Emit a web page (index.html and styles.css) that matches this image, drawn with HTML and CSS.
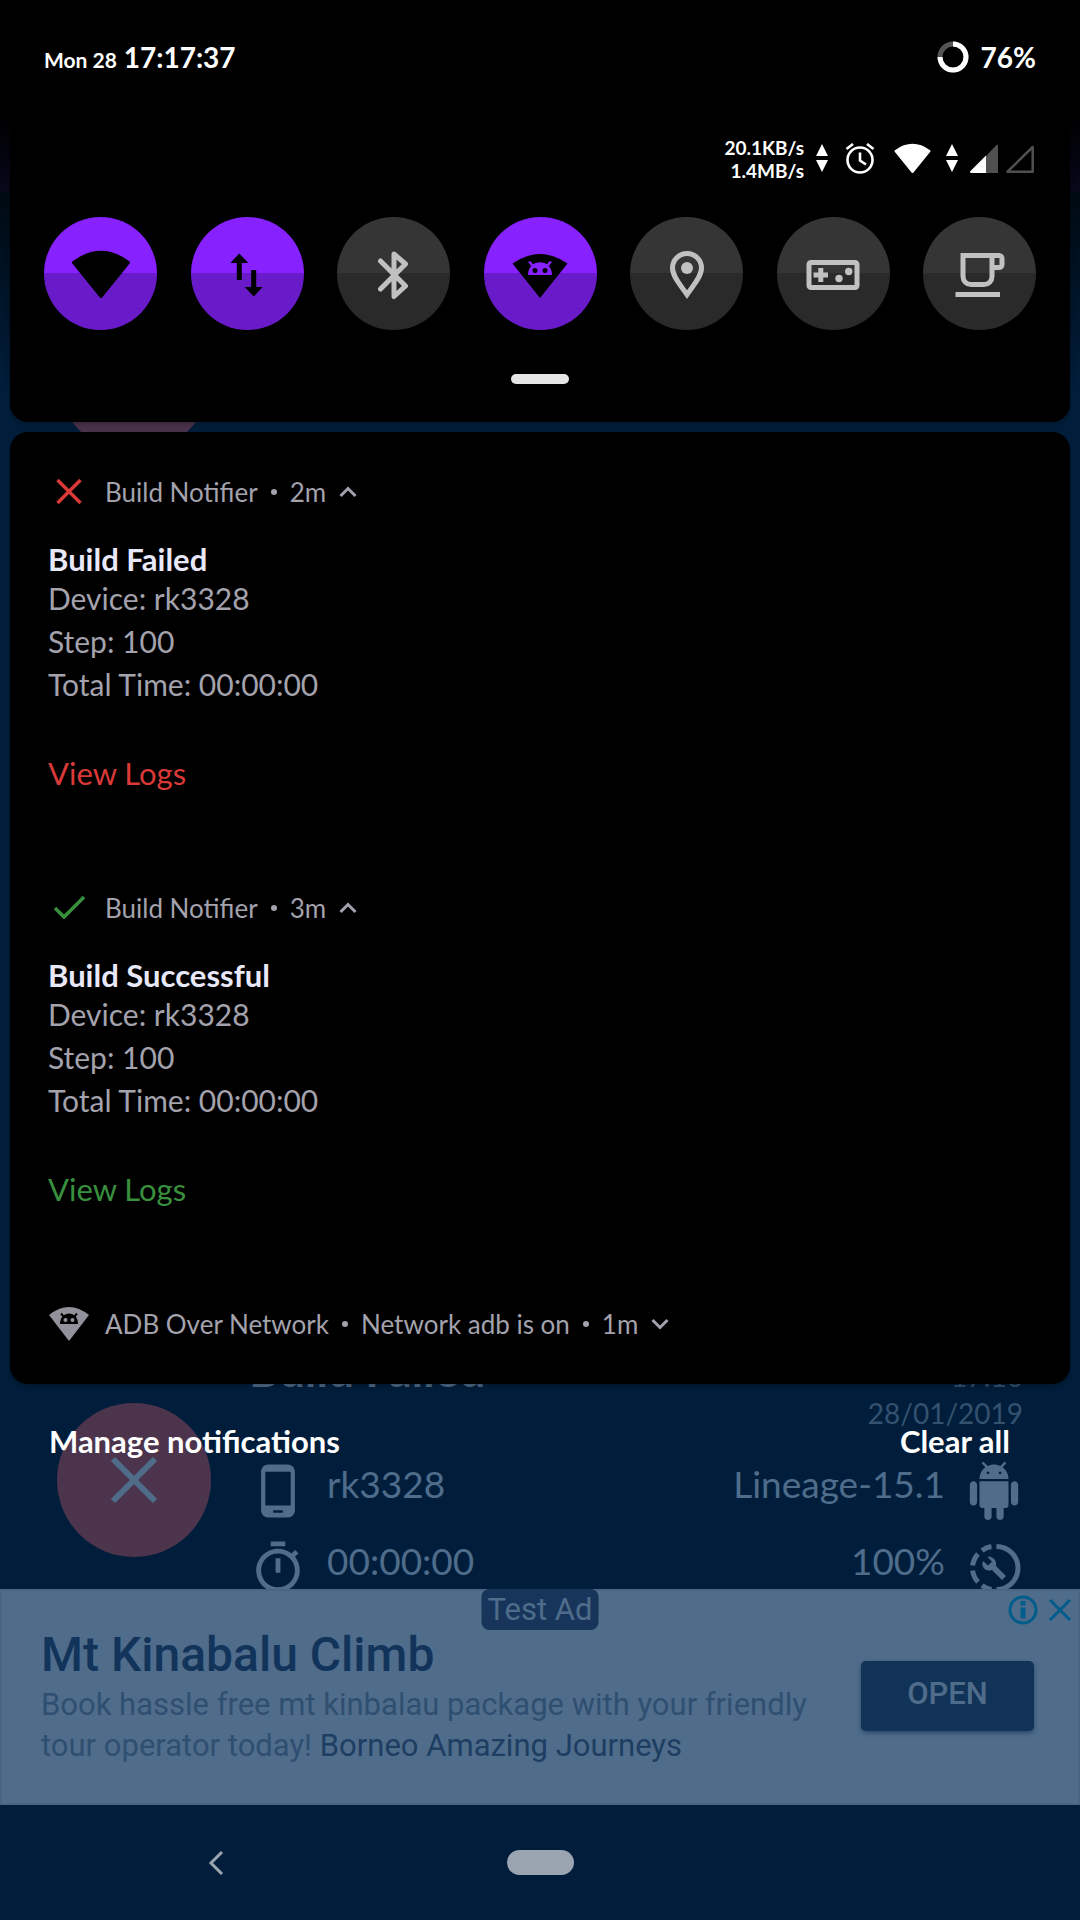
FILE: index.html
```html
<!DOCTYPE html>
<html lang="en">
<head>
<meta charset="utf-8">
<meta name="viewport" content="width=device-width, initial-scale=1">
<title>Build Notifier</title>
<link rel="stylesheet" href="styles.css">
</head>
<body>
<div class="screen">

  <main class="app">
    <section class="builds">
      <div class="build-badge"></div>
      <article class="build">
        <div class="build-badge">
          <svg width="60" height="60" viewBox="0 0 60 60" fill="none" stroke="currentColor" stroke-width="6"><path d="M9 9L51 51M51 9L9 51"/></svg>
        </div>
        <div class="build-info">
          <header class="build-head">
            <h2>Build Failed</h2>
            <p class="build-date">17:16<br>28/01/2019</p>
          </header>
          <div class="build-row">
            <svg class="build-icon" viewBox="0 0 24 24" fill="currentColor"><path d="M16 1H8C6.34 1 5 2.34 5 4v16c0 1.66 1.34 3 3 3h8c1.66 0 3-1.34 3-3V4c0-1.66-1.34-3-3-3zm-2 20h-4v-1h4v1zm3.25-3H6.75V4h10.5v14z"/></svg>
            <span>rk3328</span>
            <span class="end">Lineage-15.1</span>
            <svg class="build-icon" viewBox="0 0 24 24" fill="currentColor"><path d="M6 18c0 .55.45 1 1 1h1v3.5c0 .83.67 1.5 1.5 1.5s1.5-.67 1.5-1.5V19h2v3.5c0 .83.67 1.5 1.5 1.5s1.5-.67 1.5-1.5V19h1c.55 0 1-.45 1-1V8H6v10zM3.5 8C2.67 8 2 8.67 2 9.5v7c0 .83.67 1.5 1.5 1.5S5 17.33 5 16.5v-7C5 8.67 4.33 8 3.5 8zm17 0c-.83 0-1.5.67-1.5 1.5v7c0 .83.67 1.5 1.5 1.5s1.5-.67 1.5-1.5v-7c0-.83-.67-1.5-1.5-1.5zm-4.97-5.84l1.3-1.3c.2-.2.2-.51 0-.71-.2-.2-.51-.2-.71 0l-1.48 1.48C13.85 1.23 12.95 1 12 1c-.96 0-1.86.23-2.66.63L7.85.15c-.2-.2-.51-.2-.71 0-.2.2-.2.51 0 .71l1.31 1.31C6.97 3.26 6 5.01 6 7h12c0-1.99-.97-3.75-2.47-4.84zM10 5H9V4h1v1zm5 0h-1V4h1v1z"/></svg>
          </div>
          <div class="build-row">
            <svg class="build-icon" viewBox="0 0 24 24" fill="currentColor"><path d="M15 1H9v2h6V1zm-4 13h2V8h-2v6zm8.03-6.61l1.42-1.42c-.43-.51-.9-.99-1.41-1.41l-1.42 1.42C16.07 4.74 14.12 4 12 4c-4.97 0-9 4.03-9 9s4.02 9 9 9 9-4.03 9-9c0-2.12-.74-4.07-1.97-5.61zM12 20c-3.87 0-7-3.13-7-7s3.13-7 7-7 7 3.13 7 7-3.13 7-7 7z"/></svg>
            <span>00:00:00</span>
            <span class="end">100%</span>
            <svg class="build-icon" viewBox="0 0 58 58" fill="none" stroke="currentColor" stroke-width="5"><path d="M31.500 7.500A21.500 21.500 0 0 1 31.500 50.500M26.500 7.500A21.500 21.500 0 0 0 17 11.500M13 15A21.500 21.500 0 0 0 7.600 26.500M7.600 31.500A21.500 21.500 0 0 0 13 43M17 46.500A21.500 21.500 0 0 0 26.500 50.500"/><path fill="currentColor" stroke="none" d="M41 37L31 27C32 23 29.500 18 24 17.500L22.500 18L27 22.500L23 26.500L18 22C15.500 27 20.500 33.500 27 31L37 41Z"/></svg>
          </div>
        </div>
      </article>
    </section>

    <aside class="ad">
      <span class="ad-label">Test Ad</span>
      <div class="ad-tools">
        <button type="button" aria-label="Ad information"><svg width="30" height="30" viewBox="0 0 30 30" fill="none" stroke="currentColor" stroke-width="3"><circle cx="15" cy="15" r="13"/><path stroke-width="5" d="M15 12.500V23.500M15 6V10.500"/></svg></button>
        <button type="button" aria-label="Close ad"><svg width="24" height="30" viewBox="0 0 24 30" fill="none" stroke="currentColor" stroke-width="3"><path d="M2 5L22 25M22 5L2 25"/></svg></button>
      </div>
      <div class="ad-copy">
        <h2>Mt Kinabalu Climb</h2>
        <p>Book hassle free mt kinbalau package with your friendly tour operator today! <a href="#">Borneo Amazing Journeys</a></p>
      </div>
      <button class="ad-open" type="button">OPEN</button>
    </aside>

    <nav class="navbar">
      <button type="button" aria-label="Back"><svg width="16" height="24" viewBox="0 0 16 24" fill="none" stroke="currentColor" stroke-width="3"><path d="M14 1L3 12L14 23"/></svg></button>
      <button type="button" aria-label="Home"><span class="home-pill"></span></button>
    </nav>
  </main>

  <div class="shade">
    <section class="quick">
      <div class="status">
        <div class="clock"><span class="date">Mon 28</span> <time>17:17:37</time></div>
        <div class="battery">
          <svg width="32" height="32" viewBox="0 0 32 32" fill="none" stroke-width="5"><circle cx="16" cy="16" r="13" stroke="#555"/><path stroke="#fff" d="M16 3A13 13 0 1 1 3 16"/></svg>
          <span>76%</span>
        </div>
      </div>
      <div class="signals">
        <p class="speed">20.1KB/s<br>1.4MB/s</p>
        <svg width="12" height="30" viewBox="0 0 12 30" fill="#fff"><path d="M6 0L12 12H0ZM6 28L12 16H0Z"/></svg>
        <svg width="42" height="32" viewBox="0 0 42 32" fill="none" stroke="#fff" stroke-width="2.600"><circle cx="20" cy="17" r="12.500"/><path d="M20 9.500V17.500L26 21.500M6.500 6L13 1M33.500 6L27 1"/></svg>
        <svg width="40" height="32" viewBox="0 0 40 32" fill="#fff" stroke="#fff" stroke-width="2" stroke-linejoin="round"><path d="M1.500 8Q18.500 -4.500 35.500 8L18.500 29Z"/></svg>
        <svg width="12" height="30" viewBox="0 0 12 30" fill="#fff"><path d="M6 0L12 12H0ZM6 28L12 16H0Z"/></svg>
        <div class="cells">
          <svg width="30" height="30" viewBox="0 0 30 30"><path fill="#505050" d="M28 1V29H16V12L26.500 1Z"/><path fill="#fff" d="M16 11.500V29H1.500Q0 29 0 27.500Z"/></svg>
          <svg width="30" height="30" viewBox="0 0 30 30" fill="none" stroke="#505050" stroke-width="2.500" stroke-linejoin="round"><path d="M26.700 3V27.700H1.500Z"/></svg>
        </div>
      </div>
      <div class="tiles">
        <button type="button" class="tile on" aria-label="Wi-Fi"><svg viewBox="0 0 60 60" fill="#000" stroke="#000" stroke-width="3" stroke-linejoin="round"><path d="M2.500 18.500Q30 -2 57.500 18.500L30 52.500Z"/></svg></button>
        <button type="button" class="tile on" aria-label="Mobile data"><svg viewBox="0 0 60 60" fill="#000"><path d="M22.300 9.500L31.300 19H24.800V36H19.800V19H13.300ZM36.700 52.500L45.700 43H39.200V26H34.200V43H27.700Z"/></svg></button>
        <button type="button" class="tile" aria-label="Bluetooth"><svg viewBox="0 0 60 60" fill="none" stroke="currentColor" stroke-width="5" stroke-linecap="round" stroke-linejoin="round"><path d="M16.500 17L41.500 42L30 52.500V10L41.500 20L16.500 45"/></svg></button>
        <button type="button" class="tile on" aria-label="ADB over network"><svg viewBox="0 0 60 60"><path fill="#000" d="M2.500 19.500Q30 .5 57.500 19.500L30 54Z"/><path fill="#8722ff" d="M18 31C18 14 42 14 42 31Z"/><path stroke="#8722ff" stroke-width="2.500" d="M19 17.500L23.500 22.500M41 17.500L36.500 22.500"/><circle cx="25" cy="26.500" r="2.500"/><circle cx="35" cy="26.500" r="2.500"/></svg></button>
        <button type="button" class="tile" aria-label="Location"><svg viewBox="0 0 60 60" fill="none" stroke="currentColor" stroke-width="5"><path d="M30 50.500C25 43 15.500 33 15.500 24A14.500 14.500 0 0 1 44.500 24C44.500 33 35 43 30 50.500Z"/><circle cx="30" cy="24" r="6" fill="currentColor" stroke="none"/></svg></button>
        <button type="button" class="tile" aria-label="Gaming mode"><svg viewBox="0 0 60 60" fill="none" stroke="currentColor" stroke-width="5"><rect x="6" y="18.500" width="48" height="25" rx="2"/><path d="M10.500 31H25M17.800 24V38"/><g fill="currentColor" stroke="none"><circle cx="36" cy="34.500" r="3.700"/><circle cx="45.700" cy="27.500" r="3.700"/></g></svg></button>
        <button type="button" class="tile" aria-label="Caffeine"><svg viewBox="0 0 60 60" fill="none" stroke="currentColor" stroke-width="5"><path d="M13 11.500H42V32.500A8 8 0 0 1 34 40.500H21A8 8 0 0 1 13 32.500ZM42 11.500H49A3 3 0 0 1 52 14.500V20.500A3 3 0 0 1 49 23.500H42M5.500 50.500H50"/></svg></button>
      </div>
      <div class="handle"></div>
    </section>

    <section class="notifications">
      <article class="note failed">
        <header class="note-head">
          <svg class="note-icon" viewBox="0 0 42 36" fill="none" stroke="currentColor" stroke-width="3.500"><path d="M9.500 6L32.500 29M32.500 6L9.500 29"/></svg>
          <span>Build Notifier</span><i class="dot"></i><span>2m</span>
          <svg class="chevron" viewBox="0 0 18 12" fill="none" stroke="currentColor" stroke-width="3"><path d="M1.500 10L9 2.500L16.500 10"/></svg>
        </header>
        <h3>Build Failed</h3>
        <p>Device: rk3328<br>Step: 100<br>Total Time: 00:00:00</p>
        <button type="button">View Logs</button>
      </article>
      <article class="note passed">
        <header class="note-head">
          <svg class="note-icon" viewBox="0 0 42 36" fill="none" stroke="currentColor" stroke-width="3.500"><path d="M7 18L16 27L36 7"/></svg>
          <span>Build Notifier</span><i class="dot"></i><span>3m</span>
          <svg class="chevron" viewBox="0 0 18 12" fill="none" stroke="currentColor" stroke-width="3"><path d="M1.500 10L9 2.500L16.500 10"/></svg>
        </header>
        <h3>Build Successful</h3>
        <p>Device: rk3328<br>Step: 100<br>Total Time: 00:00:00</p>
        <button type="button">View Logs</button>
      </article>
      <article class="note">
        <header class="note-head">
          <svg class="note-icon" viewBox="0 0 42 36"><path fill="#92929d" d="M1 9Q21 -7 41 9L21 35Z"/><path d="M12 18C12 4 30 4 30 18Z"/><path stroke="#000" stroke-width="2" d="M13 7.500L16 11M29 7.500L26 11"/><circle fill="#92929d" cx="17.500" cy="14" r="2"/><circle fill="#92929d" cx="24.500" cy="14" r="2"/></svg>
          <span>ADB Over Network</span><i class="dot"></i><span>Network adb is on</span><i class="dot"></i><span>1m</span>
          <svg class="chevron" viewBox="0 0 18 12" fill="none" stroke="currentColor" stroke-width="3"><path d="M1.500 2L9 9.500L16.500 2"/></svg>
        </header>
      </article>
    </section>

    <footer class="shade-actions">
      <button type="button">Manage notifications</button>
      <button type="button">Clear all</button>
    </footer>
  </div>
</div>
</body>
</html>
```
FILE: styles.css
```css
* { box-sizing: border-box; }

body, h2, h3, p { margin: 0; }

body {
  background: #001e3c;
  font-family: Lato, "Liberation Sans", sans-serif;
  font-size: 30px;
}

button {
  border: 0;
  padding: 0;
  background: none;
  color: inherit;
  font: inherit;
}

svg { display: block; flex: none; }

.screen {
  display: grid;
  min-height: 100vh;
}

.app, .shade { grid-area: 1 / 1; min-width: 0; }

/* Dimmed app behind the shade */
.app {
  display: flex;
  flex-direction: column;
  color: #4f6c8b;
  background:
    linear-gradient(#000 110px, #07081a 192px) top / 100% 192px no-repeat,
    linear-gradient(#000a12 192px, #001e3c 390px);
}

.builds {
  flex: 1;
  display: flex;
  flex-direction: column;
  justify-content: space-between;
  padding: 299px 57px 0;
  overflow: hidden;
}

.build-badge {
  flex: none;
  display: grid;
  place-items: center;
  width: 154px;
  height: 154px;
  border-radius: 50%;
  background: #4c344c;
}

.build {
  display: flex;
  align-items: flex-end;
  gap: 38px;
  margin-bottom: -8px;
}

.build .build-badge { margin-bottom: 40px; }

.build-info {
  flex: 1;
  display: grid;
  gap: 19px;
}

.build-head {
  display: flex;
  justify-content: space-between;
  margin-bottom: 11px;
}

.build-head h2 {
  font-size: 46px;
  line-height: 48px;
}

.build-date {
  padding-top: 12px;
  color: #34516f;
  font-size: 28px;
  line-height: 37px;
  text-align: right;
}

.build-row {
  display: flex;
  gap: 20px;
  font-size: 37px;
  line-height: 44px;
}

.build-row .end { margin-left: auto; }

.build-icon { width: 58px; height: 58px; }

.ad {
  position: relative;
  display: flex;
  align-items: center;
  justify-content: space-between;
  min-height: 216px;
  padding: 10px 44px 12px 39px;
  border: 2px solid #486583;
  background: #4f6c8b;
  color: #2f4f71;
  font-family: Roboto, "Liberation Sans", sans-serif;
}

.ad-label {
  position: absolute;
  top: -2px;
  left: 50%;
  transform: translateX(-50%);
  padding: 0 6px;
  border-radius: 8px;
  background: #17355a;
  color: #4f6c8b;
  font-size: 31px;
  line-height: 41px;
  white-space: nowrap;
}

.ad-tools {
  position: absolute;
  top: 4px;
  right: 6px;
  display: flex;
  gap: 10px;
  color: #005c8b;
}

.ad-copy { max-width: 790px; }

.ad-copy h2 {
  color: #12345a;
  font-size: 48px;
  font-weight: 500;
  line-height: 58px;
}

.ad-copy p {
  font-size: 31px;
  line-height: 41px;
}

.ad-copy a { color: #1d3e62; text-decoration: none; }

.ad-open {
  width: 173px;
  height: 70px;
  padding-bottom: 6px;
  border-radius: 5px;
  background: #123358;
  color: #4f6c8b;
  font-size: 31px;
  font-weight: 500;
  box-shadow: 0 2px 4px #294766;
}

.navbar {
  display: grid;
  grid-template-columns: repeat(3, 1fr);
  place-items: center;
  min-height: 115px;
  padding: 0 54px;
  background: #001e3c;
  color: #9aa5b1;
}

.home-pill {
  display: block;
  width: 67px;
  height: 25px;
  border-radius: 13px;
  background: #9aa5b1;
}

/* Notification shade */
.shade {
  position: relative;
  padding: 0 10px;
  color: #fff;
}

.quick {
  padding: 36px 34px 38px;
  border-radius: 0 0 18px 18px;
  background: #000;
  box-shadow: 0 2px 6px rgba(0, 0, 0, 0.3);
}

.status, .signals, .battery, .cells, .tiles {
  display: flex;
  align-items: center;
}

.status {
  justify-content: space-between;
  height: 42px;
  margin-bottom: 58px;
  font-size: 28px;
  font-weight: 700;
}

.date { font-size: 21px; }

.battery { gap: 12px; }

.signals {
  justify-content: flex-end;
  gap: 12px;
  margin-bottom: 35px;
}

.speed {
  font-size: 19px;
  font-weight: 700;
  line-height: 23px;
  text-align: right;
}

.cells { gap: 6px; }

.tiles { justify-content: space-between; }

.tile {
  display: grid;
  place-items: center;
  width: 113px;
  height: 113px;
  border-radius: 50%;
  background: linear-gradient(#353535 50%, #2a2a2a 50%);
  color: #c1c1c1;
}

.tile.on { background: linear-gradient(#8722ff 50%, #6a1bc9 50%); }

.tile svg { width: 60px; height: 60px; }

.handle {
  width: 58px;
  height: 10px;
  margin: 44px auto 0;
  border-radius: 5px;
  background: #e6e6e6;
}

.notifications {
  display: grid;
  gap: 95px;
  margin-top: 10px;
  padding: 40px 38px;
  border-radius: 18px;
  background: #000;
  color: #a3a2ad;
  box-shadow: 0 2px 6px rgba(0, 0, 0, 0.3);
}

.note-head {
  display: flex;
  align-items: center;
  height: 40px;
  font-size: 26px;
}

.note-icon {
  width: 42px;
  height: 36px;
  margin-right: 15px;
}

.failed .note-icon, .failed button { color: #d93a38; }

.passed .note-icon, .passed button { color: #388f3e; }

.dot {
  width: 6px;
  height: 6px;
  margin: 0 13px;
  border-radius: 50%;
  background: currentColor;
}

.chevron {
  width: 18px;
  height: 12px;
  margin-left: 13px;
}

.note h3 {
  margin-top: 29px;
  color: #e8e8f8;
  font-size: 31px;
  line-height: 36px;
}

.note p {
  margin-bottom: 47px;
  line-height: 43px;
}

.note button, .shade-actions button {
  display: block;
  font-size: 31px;
  line-height: 40px;
}

.shade-actions {
  display: flex;
  justify-content: space-between;
  padding: 37px 60px 0 39px;
}

.shade-actions button { font-weight: 700; }
```
